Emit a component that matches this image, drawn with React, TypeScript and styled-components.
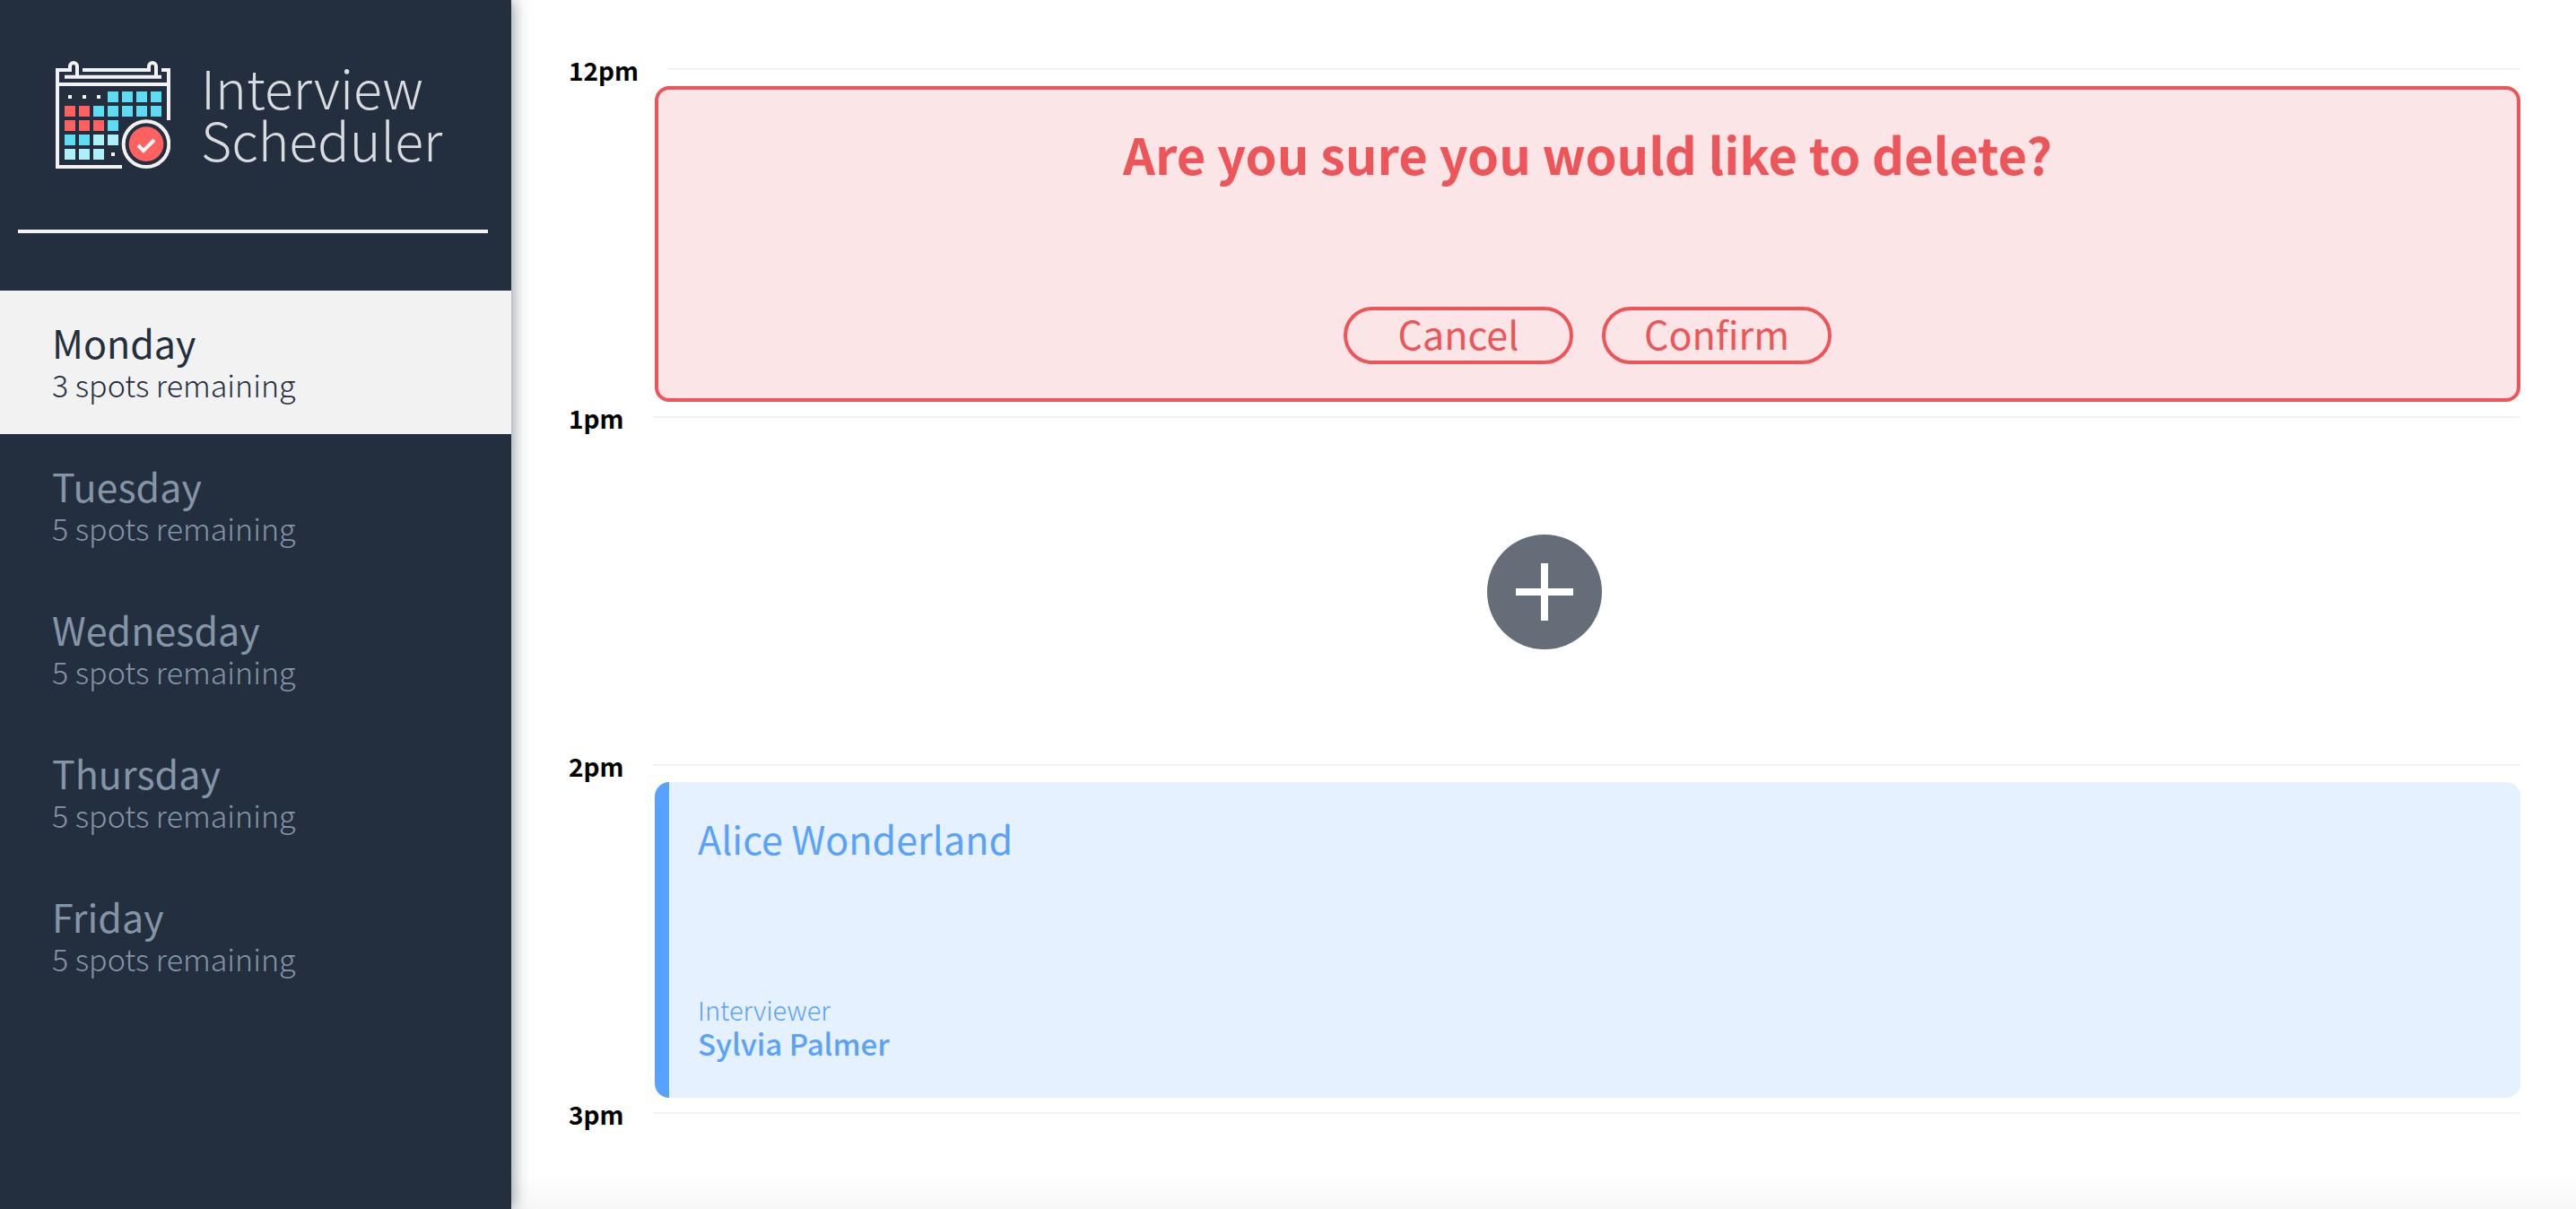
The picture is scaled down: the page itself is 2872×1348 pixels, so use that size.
import React, { useState } from "react";
import styled, { createGlobalStyle } from "styled-components";

const GlobalStyle = createGlobalStyle`
  *, *::before, *::after { box-sizing: border-box; }
  body {
    margin: 0;
    background: #fff;
    color: #000;
    font-family: "Noto Sans CJK SC", "Noto Sans", sans-serif;
  }
  button { font: inherit; color: inherit; cursor: pointer; }
  h1, h2, p, ul { margin: 0; padding: 0; }
`;

const Layout = styled.div`
  display: flex;
  min-height: 100vh;
`;

const Sidebar = styled.aside`
  position: relative;
  flex: 0 0 570px;
  background: #232f3f;
  box-shadow: 2px 0 16px rgba(34, 47, 62, 0.5);
`;

const Brand = styled.div`
  display: flex;
  align-items: flex-start;
  gap: 34px;
  padding: 68px 0 68px 62px;
`;

const BrandName = styled.h1`
  display: flex;
  flex-direction: column;
  height: 120px;
  color: #d9dbde;
  font-size: 59px;
  font-weight: 300;
  line-height: 58px;
`;

const Divider = styled.hr`
  height: 4px;
  margin: 0 26px 64px 20px;
  border: 0;
  background: #f2f2f2;
`;

const DayList = styled.ul`
  list-style: none;
`;

const DayButton = styled.button<{ $selected: boolean }>`
  display: flex;
  flex-direction: column;
  width: 100%;
  padding: 33px 58px 31px;
  border: 0;
  text-align: left;
  background: ${(p) => (p.$selected ? "#f2f2f2" : "transparent")};
  color: ${(p) => (p.$selected ? "#222f3e" : "#8395a7")};
`;

const DayName = styled.span`
  font-size: 43px;
  font-weight: 400;
  line-height: 48px;
`;

const DaySpots = styled.span`
  font-size: 34px;
  font-weight: 300;
  line-height: 48px;
`;

const Schedule = styled.main`
  flex: 1;
  min-width: 0;
  padding: 60px 62px 64px 64px;
  background: linear-gradient(to top, #f7f7f7, #fff 40px);
`;

const SlotHeader = styled.header`
  display: flex;
  align-items: center;
  gap: 32px;
  height: 34px;
  margin-bottom: 2px;

  &::after {
    content: "";
    flex: 1;
    height: 2px;
    background: #f2f2f2;
  }
`;

const SlotTime = styled.h2`
  padding-top: 2px;
  font-size: 28px;
  font-weight: 700;
  line-height: 32px;
`;

const EmptySlot = styled.div`
  display: flex;
  align-items: center;
  justify-content: center;
  min-height: 352px;
`;

const AddButton = styled.button`
  display: block;
  padding: 0;
  border: 0;
  border-radius: 50%;
  background: none;

  svg { display: block; }
`;

const Card = styled.article`
  display: flex;
  flex-direction: column;
  justify-content: space-between;
  min-height: 352px;
  margin-left: 96px;
  border-radius: 16px;
`;

const ConfirmCard = styled(Card)`
  align-items: center;
  padding: 38px;
  border: 4px solid #ee5558;
  background: #fbe5e6;
  color: #ee5558;
`;

const ConfirmMessage = styled.p`
  font-size: 56px;
  font-weight: 700;
  line-height: 66px;
`;

const Actions = styled.div`
  display: flex;
  gap: 32px;
`;

const ActionButton = styled.button`
  min-width: 256px;
  height: 64px;
  padding: 0 16px 6px;
  border: 4px solid #ee5558;
  border-radius: 32px;
  background: transparent;
  font-size: 43px;
  font-weight: 400;
  line-height: 50px;
`;

const BookingCard = styled(Card)`
  padding: 38px 32px 42px;
  border-left: 16px solid #58a2fd;
  background: #e5f1fe;
  color: #58a2fd;
`;

const Student = styled.p`
  font-size: 43px;
  font-weight: 400;
  line-height: 48px;
`;

const InterviewerLabel = styled.p`
  font-size: 29px;
  font-weight: 300;
  line-height: 38px;
`;

const InterviewerName = styled.p`
  font-size: 33px;
  font-weight: 500;
  line-height: 38px;
`;

const RED = "#ff6060";
const CYAN = "#5edcf2";
const PALE = "#aef0f8";
const CELLS: (string | null)[][] = [
  [null, null, null, CYAN, CYAN, CYAN, CYAN],
  [RED, RED, CYAN, CYAN, CYAN, CYAN, CYAN],
  [RED, RED, RED, CYAN],
  [CYAN, CYAN, PALE, PALE],
  [PALE, PALE, PALE, null],
];

const CalendarLogo = () => (
  <svg width="128" height="120" viewBox="36 24 384 360" fill="none" aria-hidden="true">
    <g stroke="#f2f2f2" strokeWidth="12">
      <path d="M258 378H42V54H84V42a12 12 0 0 1 24 0V77" />
      <path d="M126 54H348V42a12 12 0 0 1 24 0V77" />
      <path d="M66 77H390M42 102H414M390 54H414V222" />
      <circle cx="339" cy="302" r="76" />
    </g>
    {CELLS.map((row, r) =>
      row.map((fill, c) =>
        fill ? (
          <rect key={`${r}-${c}`} x={66 + c * 48} y={126 + r * 48} width="36" height="36" fill={fill} />
        ) : (
          <rect key={`${r}-${c}`} x={78 + c * 48} y={138 + r * 48} width="12" height="12" fill="#f2f2f2" />
        )
      )
    )}
    <circle cx="339" cy="302" r="58" fill={RED} />
    <path d="M312 306L330 324L366 288" stroke="#fff" strokeWidth="12" />
  </svg>
);

const days = [
  { name: "Monday", spots: 3 },
  { name: "Tuesday", spots: 5 },
  { name: "Wednesday", spots: 5 },
  { name: "Thursday", spots: 5 },
  { name: "Friday", spots: 5 },
];

const Slot = ({ time, children }: { time: string; children?: React.ReactNode }) => (
  <section>
    <SlotHeader>
      <SlotTime>{time}</SlotTime>
    </SlotHeader>
    {children}
  </section>
);

export default function App() {
  const [selected, setSelected] = useState("Monday");

  return (
    <>
      <GlobalStyle />
      <Layout>
        <Sidebar>
          <Brand>
            <CalendarLogo />
            <BrandName>
              <span>Interview</span>
              <span>Scheduler</span>
            </BrandName>
          </Brand>
          <Divider />
          <nav>
            <DayList>
              {days.map((day) => (
                <li key={day.name}>
                  <DayButton
                    type="button"
                    $selected={day.name === selected}
                    onClick={() => setSelected(day.name)}
                  >
                    <DayName>{day.name}</DayName>
                    <DaySpots>{day.spots} spots remaining</DaySpots>
                  </DayButton>
                </li>
              ))}
            </DayList>
          </nav>
        </Sidebar>
        <Schedule>
          <Slot time="12pm">
            <ConfirmCard>
              <ConfirmMessage>Are you sure you would like to delete?</ConfirmMessage>
              <Actions>
                <ActionButton type="button">Cancel</ActionButton>
                <ActionButton type="button">Confirm</ActionButton>
              </Actions>
            </ConfirmCard>
          </Slot>
          <Slot time="1pm">
            <EmptySlot>
              <AddButton type="button" aria-label="Add">
                <svg width="128" height="128" viewBox="0 0 128 128" aria-hidden="true">
                  <circle cx="64" cy="64" r="64" fill="#646d78" />
                  <path d="M64 32V96M32 64H96" stroke="#fff" strokeWidth="8" />
                </svg>
              </AddButton>
            </EmptySlot>
          </Slot>
          <Slot time="2pm">
            <BookingCard>
              <Student>Alice Wonderland</Student>
              <div>
                <InterviewerLabel>Interviewer</InterviewerLabel>
                <InterviewerName>Sylvia Palmer</InterviewerName>
              </div>
            </BookingCard>
          </Slot>
          <Slot time="3pm" />
        </Schedule>
      </Layout>
    </>
  );
}
